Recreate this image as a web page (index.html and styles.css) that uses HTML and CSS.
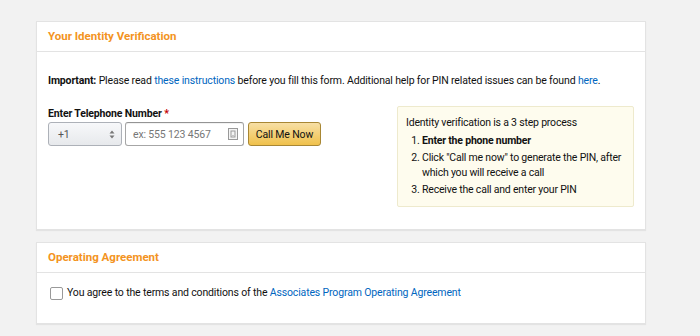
FILE: index.html
```html
<!DOCTYPE html>
<html lang="en">
<head>
  <meta charset="UTF-8" />
  <title>Identity Verification</title>
  <link rel="stylesheet" href="styles.css">
</head>
<body>
  <div class="page">

    <div class="card">
      <div class="card-header">Your Identity Verification</div>
      <div class="card-body">
        <p class="note"><b>Important:</b> Please read <a href="#">these instructions</a> before you fill this form. Additional help for PIN related issues can be found <a href="#">here</a>.</p>

        <div class="phone-row">
          <div class="phone-form">
            <label class="field-label" for="phone">Enter Telephone Number <span class="req">*</span></label>
            <div class="controls">
              <div class="select">
                <span>+1</span>
                <svg width="6" height="9" viewBox="0 0 6 9"><path d="M3 0.5 L5.5 3.5 H0.5 Z M3 8.5 L5.5 5.5 H0.5 Z" fill="#777"/></svg>
              </div>
              <div class="phone-input">
                <span class="placeholder">ex: 555 123 4567</span>
                <svg width="10" height="12" viewBox="0 0 10 12"><rect x="0.5" y="0.5" width="9" height="11" fill="#f4f4f4" stroke="#999"/><rect x="3" y="3" width="4" height="6" fill="none" stroke="#999"/><rect x="4.5" y="7" width="1" height="1" fill="#999"/></svg>
              </div>
              <button class="call-btn" type="button">Call Me Now</button>
            </div>
          </div>

          <div class="steps">
            <div>Identity verification is a 3 step process</div>
            <ol>
              <li><b>Enter the phone number</b></li>
              <li>Click "Call me now" to generate the PIN, after which you will receive a call</li>
              <li>Receive the call and enter your PIN</li>
            </ol>
          </div>
        </div>
      </div>
    </div>

    <div class="card">
      <div class="card-header">Operating Agreement</div>
      <div class="card-body agree">
        <label class="check"><span class="box"></span><span>You agree to the terms and conditions of the <a href="#">Associates Program Operating Agreement</a></span></label>
      </div>
    </div>

  </div>
</body>
</html>
```

FILE: styles.css
```css
body {
  margin: 0;
  background: #f2f2f2;
  font-family: Roboto, "Noto Sans", sans-serif;
  font-size: 10.5px;
  letter-spacing: -0.15px;
  color: #111;
}

a {
  color: #0066c0;
  text-decoration: none;
}

.page {
  width: 610px;
  margin-left: 36px;
  padding-top: 21px;
}

.card {
  background: #fff;
  border: 1px solid #e3e3e3;
  box-shadow: 0 1px 1px rgba(0, 0, 0, 0.06);
  margin-bottom: 12px;
}

.card-header {
  height: 29px;
  line-height: 29px;
  padding: 0 11px;
  border-bottom: 1px solid #e3e3e3;
  color: #f39322;
  font-weight: bold;
  font-size: 11.5px;
  letter-spacing: 0;
}

.card-body {
  padding: 21px 11px 22px;
}

.note {
  margin: 0 0 16px;
  line-height: 16px;
}

.phone-row {
  display: flex;
  justify-content: space-between;
  align-items: flex-start;
}

.field-label {
  display: block;
  font-weight: bold;
  line-height: 16px;
  padding-top: 1px;
}

.req {
  color: #c40000;
}

.controls {
  display: flex;
  gap: 3px;
}

.select {
  width: 74px;
  height: 24px;
  box-sizing: border-box;
  border: 1px solid #adb1b8;
  border-radius: 3px;
  background: linear-gradient(#f7f8fa, #e7e9ec);
  display: flex;
  align-items: center;
  justify-content: space-between;
  padding: 0 6px 0 9px;
  color: #555;
}

.phone-input {
  width: 119px;
  height: 24px;
  box-sizing: border-box;
  border: 1px solid #a6a6a6;
  border-top-color: #949494;
  border-radius: 3px;
  padding: 0 5px 0 7px;
  display: flex;
  align-items: center;
  justify-content: space-between;
  box-shadow: inset 0 1px 0 rgba(0, 0, 0, 0.05);
}

.placeholder {
  color: #777;
}

.call-btn {
  width: 73px;
  height: 24px;
  padding: 0;
  margin-left: 1px;
  border: 1px solid #a88734;
  border-radius: 3px;
  background: linear-gradient(#f7dfa5, #f0c14b);
  font-family: inherit;
  font-size: 10.5px;
  letter-spacing: -0.15px;
  color: #111;
}

.steps {
  width: 220px;
  margin-top: 1px;
  background: #fefcee;
  border: 1px solid #eeeacd;
  border-radius: 2px;
  padding: 8px 7px 9px 8px;
  line-height: 16px;
  letter-spacing: -0.2px;
}

.steps ol {
  margin: 1px 0 0;
  padding-left: 16px;
}

.steps li {
  margin-top: 2px;
  line-height: 15px;
}

.agree {
  padding: 12px 11px 22px;
}

.check {
  display: flex;
  align-items: center;
  line-height: 16px;
}

.box {
  width: 11px;
  height: 11px;
  border: 1px solid #999;
  border-radius: 2px;
  margin: 0 4px 0 2px;
  background: #fff;
}
```
